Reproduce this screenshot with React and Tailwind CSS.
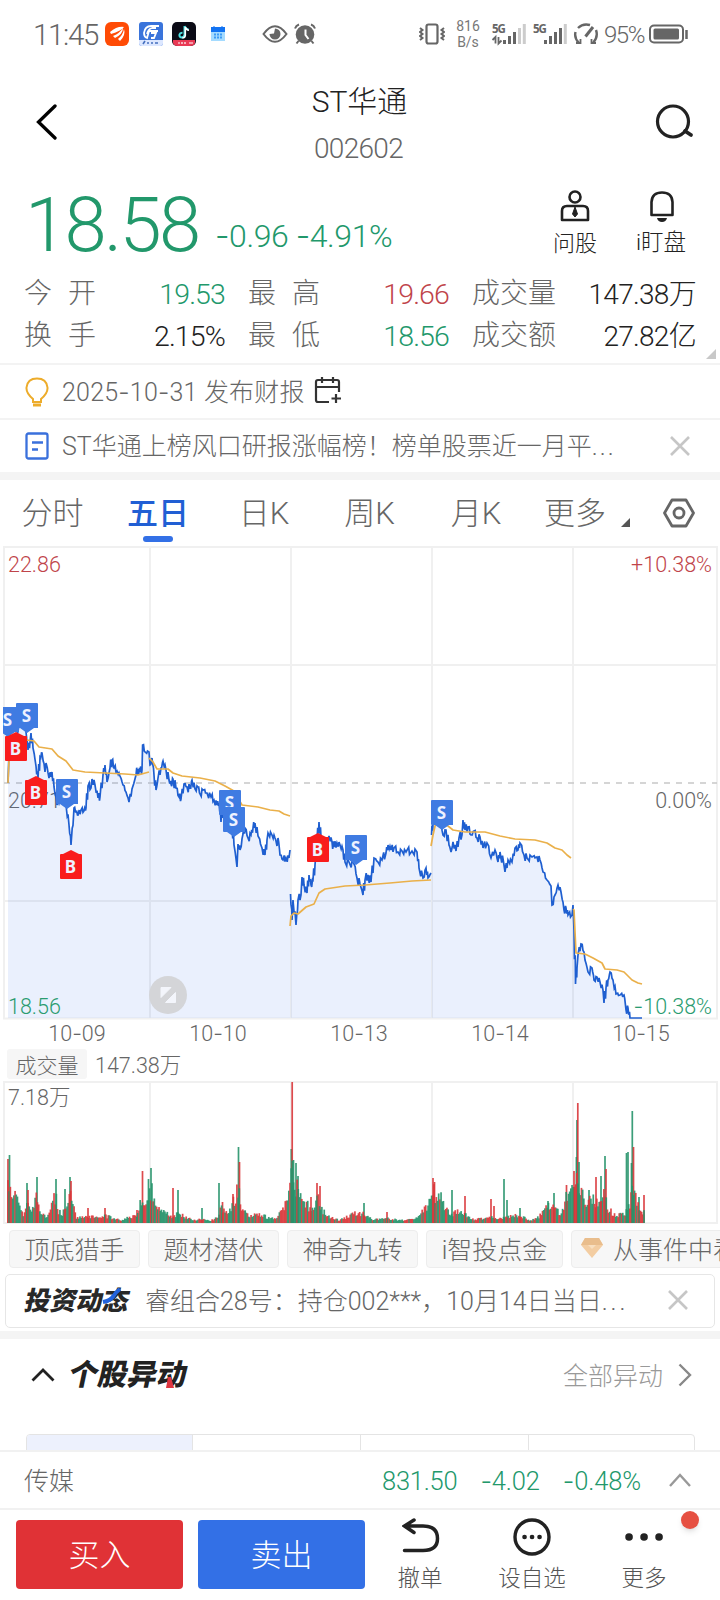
import React from 'react';

const DAYS = ['10-09', '10-10', '10-13', '10-14', '10-15'];
const GRID_X = [150, 291, 432, 573];

// price line, chart pixels
const PRICE = [
  [
    [8, 783], [9, 752], [12, 748], [16, 735], [20, 725], [24, 724], [26, 732], [28, 750], [30, 742], [31, 733], [33, 748], [36, 766], [38, 779], [40, 757], [42, 753], [45, 772], [46, 763], [49, 778], [52, 772], [54, 787], [57, 805], [60, 800], [63, 790], [66, 805], [69, 825], [71, 845], [74, 808], [76, 812], [78, 815], [81, 810], [84, 811], [86, 808], [88, 786], [91, 788], [92, 779], [95, 785], [98, 798], [100, 797], [103, 775], [105, 765], [107, 782], [110, 768], [112, 760], [114, 768], [117, 771], [120, 776], [123, 785], [126, 792], [129, 802], [132, 789], [136, 775], [138, 769], [140, 772], [142, 770], [142.6, 745], [145, 752], [149, 752], [150, 765], [152, 758], [154, 775], [156, 790], [158, 778], [161, 768], [163, 761], [166, 770], [169, 780], [171, 784], [173, 779], [176, 788], [179, 797], [181, 799], [184, 784], [187, 787], [190, 788], [192, 780], [195, 789], [198, 787], [200, 794], [203, 790], [207, 793], [211, 797], [214, 800], [217, 805], [219, 803], [221, 822], [223, 808], [226, 800], [229, 810], [232, 827], [234, 845], [237, 867], [238, 844], [240, 850], [243, 834], [245, 828], [248, 838], [251, 835], [253, 828], [255, 823], [258, 836], [262, 848], [265, 855], [267, 840], [268, 833], [272, 835], [275, 838], [277, 846], [278, 838], [280, 855], [283, 860], [286, 858], [289, 858], [290, 850],
  ],
  [
    [290.5, 894], [292, 920], [293, 900], [296, 925], [298, 900], [301, 895], [302, 877], [304, 885], [307, 893], [309, 875], [311, 885], [313, 880], [315, 865], [317, 840], [319, 822], [321, 838], [324, 845], [326, 850], [329, 836], [332, 842], [334, 847], [337, 843], [340, 845], [343, 850], [345, 862], [349, 862], [354, 864], [357, 878], [360, 884], [363, 895], [365, 880], [368, 875], [371, 882], [374, 858], [378, 862], [382, 860], [386, 853], [388, 845], [391, 850], [394, 848], [398, 852], [402, 851], [406, 852], [412, 851], [417, 852], [419, 868], [423, 878], [426, 868], [428, 878], [431, 873],
  ],
  [
    [431.5, 835], [433, 822], [436, 818], [440, 820], [443, 835], [446, 830], [449, 845], [451, 852], [453, 842], [456, 851], [459, 838], [462, 835], [463, 820], [465, 830], [468, 827], [471, 835], [474, 831], [477, 838], [480, 837], [483, 848], [487, 843], [491, 858], [495, 850], [498, 862], [500, 852], [504, 865], [505, 872], [508, 860], [512, 862], [515, 848], [518, 850], [520, 843], [524, 855], [527, 858], [532, 857], [537, 857], [540, 860], [543, 872], [547, 880], [551, 886], [552, 905], [555, 895], [558, 885], [561, 892], [564, 910], [566, 908], [568, 915], [572, 915], [573, 905], [574, 930], [575.5, 984], [577, 968], [578, 955], [581, 944], [584, 952], [585, 960], [588, 972], [592, 968], [594, 980], [597, 977], [600, 982], [603, 990], [604, 1003], [606, 988], [608, 980], [610, 972], [613, 980], [616, 994], [620, 995], [624, 995], [626, 1010], [628, 1008], [630, 1018], [634, 1018], [638, 1018], [642, 1018],
  ],
];

const AVERAGE = [
  '8,783 9,760 12,748 20,742 27,740 34,741 39,747 52,749 58,756 66,761 73,770 85,772 105,773 125,774 138,775 149,772',
  '149,758 153,762 157,769 168,769 173,773 182,776 200,778 215,781 225,786 234,791 242,805 258,807 270,810 279,811 284,814 290,816',
  '290,926 291,916 294,913 298,914 306,907 314,904 319,893 325,889 345,886 365,885 390,883 412,881 431,880',
  '431,846 433,835 436,822 448,826 453,830 465,832 485,832 500,836 515,839 535,840 547,843 555,848 562,850 567,855 571,858',
  '573,909 574,910 576,953 585,954 593,958 602,963 605,969 617,970 624,972 628,976 632,980 638,983 642,984',
];

const MARKERS = [
  ['S', 8, 707], ['S', 27, 703], ['B', 16, 732], ['B', 36, 776], ['S', 67, 779], ['B', 71, 850],
  ['S', 230, 790], ['S', 234, 807], ['B', 318, 833], ['S', 356, 835], ['S', 442, 800],
];

// volume envelope: [x, height]
const VOLUME = [
  [8, 55], [10, 45], [12, 30], [16, 38], [18, 28], [20, 15], [24, 8], [27, 25], [30, 12], [34, 25], [37, 30], [40, 15], [43, 12], [46, 8], [50, 12], [53, 25], [56, 30], [58, 15], [61, 10], [65, 15], [70, 34], [72, 24], [76, 6], [82, 6], [88, 8], [95, 6], [105, 8], [112, 6], [120, 3], [130, 7], [138, 9], [142, 30], [145, 18], [149, 34], [152, 35], [156, 22], [160, 12], [165, 12], [172, 7], [178, 11], [185, 7], [195, 3], [203, 5], [210, 2], [218, 7], [222, 18], [228, 10], [233, 22], [238, 40], [242, 18], [250, 8], [260, 9], [270, 6], [278, 6], [283, 18], [288, 24], [291, 60], [295, 46], [300, 30], [307, 20], [312, 16], [318, 30], [322, 15], [328, 7], [340, 3], [348, 8], [360, 12], [365, 9], [372, 4], [390, 5], [400, 3], [415, 4], [422, 13], [428, 20], [432, 40], [436, 30], [441, 27], [446, 16], [452, 11], [460, 13], [465, 9], [475, 4], [490, 7], [500, 5], [510, 8], [522, 8], [530, 2], [540, 8], [548, 18], [555, 16], [562, 11], [566, 27], [571, 32], [574, 37], [578, 50], [584, 24], [590, 25], [594, 26], [600, 18], [605, 34], [608, 18], [613, 9], [620, 9], [628, 14], [631, 30], [633, 44], [636, 25], [642, 14], [645, 14],
];

const SPIKES = [
  [8, 64, 'r'], [9.5, 68, 'g'], [27, 40, 'g'], [28, 33, 'r'], [37, 46, 'g'], [56, 44, 'g'], [65, 34, 'g'], [70, 46, 'g'], [71, 42, 'r'], [88, 15, 'r'], [105, 15, 'r'], [137, 13, 'r'],
  [142.5, 52, 'r'], [148.5, 44, 'g'], [151, 55, 'g'], [173, 35, 'r'], [178, 33, 'g'], [202, 15, 'g'], [219, 40, 'g'], [222.5, 21, 'r'], [233, 29, 'r'], [238.5, 76, 'g'], [239.5, 61, 'r'],
  [291.3, 74, 'g'], [292.2, 141, 'r'], [293.5, 63, 'g'], [296, 60, 'g'], [298, 47, 'g'], [311, 26, 'r'], [317, 40, 'r'], [320, 37, 'r'], [364, 20, 'g'], [387, 11, 'r'], [433, 45, 'r'], [434.5, 41, 'r'],
  [452, 33, 'g'], [465, 27, 'r'], [491, 24, 'r'], [494, 17, 'r'], [504, 44, 'g'], [507, 23, 'g'], [520, 15, 'g'], [548, 22, 'g'], [554, 30, 'g'], [566.5, 38, 'r'], [574, 52, 'r'], [576.4, 66, 'g'],
  [577, 103, 'g'], [577.8, 120, 'r'], [579, 61, 'g'], [589, 33, 'g'], [596, 46, 'r'], [601, 47, 'g'], [605, 67, 'g'], [606, 54, 'r'], [626.5, 70, 'g'], [628, 71, 'g'], [631.5, 60, 'g'], [632.3, 112, 'g'], [633.5, 76, 'r'], [639, 26, 'g'], [644, 28, 'r'],
];

const noise = (i) => {
  const v = Math.sin(i * 12.9898) * 43758.5453;
  return v - Math.floor(v);
};

const at = (points, x) => {
  for (let i = 1; i < points.length; i++) {
    if (x <= points[i][0]) {
      const [x0, y0] = points[i - 1];
      const [x1, y1] = points[i];
      return y0 + ((y1 - y0) * (x - x0)) / (x1 - x0);
    }
  }
  return points[points.length - 1][1];
};

// fills the gaps between anchors with minute by minute jitter
const jitter = (points) => {
  const out = [];
  points.forEach(([x, y], i) => {
    out.push([x, y]);
    const next = points[i + 1];
    if (next && next[0] - x >= 1.5 && y < 1018) {
      const mid = (x + next[0]) / 2;
      const dy = (noise(x) > 0.5 ? 1 : -1) * (1 + noise(x + 7) * 3.8);
      out.push([mid - 0.3, Math.min(1018, (y + next[1]) / 2 + dy)]);
      out.push([mid + 0.5, Math.min(1018, (y + next[1]) / 2 - dy * 0.7)]);
    }
  });
  return out;
};

const LINES = PRICE.map(jitter);

const BARS = [];
for (let x = 8; x < 645; x += 1.18) {
  const h = at(VOLUME, x) * (0.6 + noise(x) * 0.55);
  BARS.push([x, Math.max(2, h), noise(x + 3) > 0.5 ? 'r' : 'g']);
}

// hyphens come from Inter, its stroke is long enough for the figures
function Figures({ children, as: Tag = 'span' }) {
  return children.split('-').map((part, i) => (
    <React.Fragment key={i}>
      {i > 0 && <Tag className="font-['Inter']">-</Tag>}
      {part}
    </React.Fragment>
  ));
}

function Marker({ type, x, y }) {
  const sell = type === 'S';
  return (
    <g transform={`translate(${x - 11} ${y})`}>
      <path
        d={sell ? 'M1 0H21Q22 0 22 1V25H18L11 30L4 25H1Q0 25 0 24V1Q0 0 1 0Z' : 'M11 0L19 4H21Q22 4 22 5V28Q22 29 21 29H1Q0 29 0 28V5Q0 4 1 4H3Z'}
        fill={sell ? '#3f7be2' : '#f91c1c'}
      />
      <text x="10.500" y={sell ? 18.5 : 23} textAnchor="middle" className="fill-[#eef2ff] font-['Noto_Sans'] text-[17px] font-bold">
        {type}
      </text>
    </g>
  );
}

function PriceChart() {
  return (
    <svg viewBox="0 546 720 502" className="block h-[502px] w-[720px] shrink-0 text-[21.5px] font-light">
      <g stroke="#f0f0f0" strokeWidth="2" fill="none">
        <rect x="4" y="547" width="713" height="471.5" />
        {GRID_X.map((x) => <path key={x} d={`M${x} 547V1018`} />)}
        <path d="M4 665H717M4 901H717" />
      </g>
      <path d="M4 783H717" stroke="#c8c8c8" strokeWidth="1.6" strokeDasharray="6 6" />
      <text x="8" y="808" className="fill-[#666]">20.71</text>
      {LINES.map((line, i) => (
        <g key={i}>
          <path
            d={`M${line[0][0]} 1018L${line.map((p) => p.join(' ')).join('L')}L${line[line.length - 1][0]} 1018Z`}
            fill="#4a7cf0"
            fillOpacity="0.115"
          />
          <polyline points={line.map((p) => p.join(',')).join(' ')} fill="none" stroke="#1f5fd0" strokeWidth="1.700" />
        </g>
      ))}
      {AVERAGE.map((points) => (
        <polyline key={points} points={points} fill="none" stroke="#eab04a" strokeWidth="1.7" strokeLinejoin="round" />
      ))}
      <clipPath id="plot">
        <rect x="3" y="547" width="714" height="472" />
      </clipPath>
      <g clipPath="url(#plot)">
        {MARKERS.map(([type, x, y]) => <Marker key={`${x}-${y}`} type={type} x={x} y={y} />)}
      </g>
      <text x="8" y="572" className="fill-[#c0444a]">22.86</text>
      <text x="712" y="572" textAnchor="end" className="fill-[#c0444a]">+10.38%</text>
      <text x="712" y="808" textAnchor="end" className="fill-[#666]">0.00%</text>
      <text x="8" y="1014" className="fill-[#2a9c70]">18.56</text>
      <text x="712" y="1014" textAnchor="end" className="fill-[#2a9c70]"><Figures as="tspan">-10.38%</Figures></text>
      <circle cx="168" cy="995" r="19" fill="#d4d5d8" />
      <path d="M161 987.500H171L161 997.500ZM175.500 992.500V1002.500H165.500Z" fill="#f3f5fb" stroke="#f3f5fb" strokeLinejoin="round" />
      {DAYS.map((day, i) => (
        <text key={day} x={77 + i * 141} y="1041" textAnchor="middle" className="fill-[#666]"><Figures as="tspan">{day}</Figures></text>
      ))}
    </svg>
  );
}

function VolumeChart() {
  return (
    <svg viewBox="0 1081 720 144" className="block h-[144px] w-[720px] shrink-0 text-[21.5px] font-light">
      <g stroke="#f0f0f0" strokeWidth="2" fill="none">
        <rect x="4" y="1082" width="713" height="141" />
        {GRID_X.map((x) => <path key={x} d={`M${x} 1082V1223`} />)}
      </g>
      {[...SPIKES, ...BARS].map(([x, h, side], i) => (
        <rect key={i} x={x - 0.85} y={1223 - h} width="1.7" height={h} fill={side === 'r' ? '#d9363a' : '#26946a'} fillOpacity="0.9" />
      ))}
      <text x="8" y="1105" className="fill-[#666]">7.18万</text>
    </svg>
  );
}

function StatusBar() {
  return (
    <div className="flex h-[68px] items-center pl-[33px] pt-[2px] text-[#666]">
      <span className="w-[72px] whitespace-nowrap text-[29.5px] font-light tracking-[-0.045em]">11:45</span>
      <svg viewBox="0 0 24 24" className="-mt-[2px] size-6">
        <rect width="24" height="24" rx="6" fill="#ff4b05" />
        <path d="M5 10Q12 4 19 5Q16 9 6 12ZM8 14Q15 11 18 6Q18 12 10 16ZM13 17Q18 13 19 7Q21 13 15 19Z" fill="#fff" />
      </svg>
      <svg viewBox="0 0 24 24" className="-mt-[2px] ml-[10px] size-6">
        <rect width="24" height="24" rx="3" fill="#3a74db" />
        <path d="M0 18H24V21Q24 24 21 24H3Q0 24 0 21Z" fill="#dce7ff" />
        <path d="M20 4H12Q6 4 5 11Q5 15 8 16L10 9H19M17 6H13Q9 7 8 12M12 16H15L17 11H12" fill="none" stroke="#fff" strokeWidth="1.8" />
        <path d="M4 22L6 19M8 21H10M12 21H14M16 21H19" stroke="#4570bf" strokeWidth="1.6" />
      </svg>
      <svg viewBox="0 0 24 24" className="-mt-[2px] ml-[9px] size-6">
        <rect width="24" height="24" rx="5" fill="#0b0b16" />
        <path d="M1 18H23Q24 24 18 24H6Q0 24 1 18Z" fill="#e93a55" />
        <path d="M12.500 4V13Q12 15.500 9.500 15.500Q7 15 7.500 12.500Q8 10.500 10.500 10.700M12.500 4Q13.500 7 16.500 7.500" fill="none" stroke="#4de1e3" strokeWidth="2" />
        <path d="M13.300 5V13.500Q13 16 10.300 16M13.300 5Q14.300 8 17 8.200" fill="none" stroke="#fff" strokeWidth="1.6" />
        <path d="M6 21H8M10 20V22M13 20V22M17 21H21" stroke="#fff" strokeWidth="1.2" />
      </svg>
      <svg viewBox="0 0 16 16" className="-mt-[2px] ml-[14px] size-4">
        <path d="M1 2H15V15H1Z" fill="#a4dbff" />
        <path d="M1 1H15V6H1Z" fill="#1273f2" />
        <path d="M4 0V3M12 0V3" stroke="#1273f2" />
        <path d="M4 8.500H12M4 11.500H12" stroke="#3c9cf5" strokeWidth="1.800" strokeDasharray="2 1" />
      </svg>
      <svg viewBox="0 0 26 18" className="-mt-[2px] ml-[36px] h-[18px] w-[26px]">
        <path d="M1.500 9Q13-6.500 24.500 9Q13 24.500 1.500 9Z" fill="none" stroke="#666" strokeWidth="2" />
        <path d="M13 3.500A5.500 5.500 0 1 1 7.500 9L12 8.500Z" fill="#666" />
      </svg>
      <svg viewBox="0 0 22 22" className="-mt-[2px] ml-[6px] size-[22px]">
        <circle cx="11" cy="11.500" r="9.300" fill="#666" />
        <path d="M1 5.500Q2 2.500 5 1.500M21 5.500Q20 2.500 17 1.500M4.500 18L2.500 20.500M17.500 18L19.500 20.500" stroke="#666" strokeWidth="2" fill="none" />
        <path d="M11.500 6.500V12L14.500 16" stroke="#fff" strokeWidth="2" fill="none" />
      </svg>

      <svg viewBox="0 0 26 22" className="-mt-[2px] ml-[103px] h-[22px] w-[26px]" fill="none" stroke="#666">
        <rect x="7.500" y="1.500" width="11" height="19" rx="2" strokeWidth="2.200" />
        <path d="M1 5L3.500 7L1 9L3.500 11L1 13L3.500 15L1 17M25 5L22.500 7L25 9L22.500 11L25 13L22.500 15L25 17" strokeWidth="2" />
      </svg>
      <div className="-mt-[2px] ml-[11px] w-6 text-center text-[14px] leading-4 text-[#777]">
        <div>816</div>
        <div>B/s</div>
      </div>
      <svg viewBox="0 0 34 22" className="-mt-[2px] ml-[12px] h-[22px] w-[34px] overflow-visible">
        <text x="0" y="9.500" className="fill-[#666] font-['Open_Sans'] text-[11.5px] font-bold tracking-[-0.1em]">5G</text>
        <path d="M3.500 20.500V14L0.500 17M6.500 14V20.500L9.500 17.500" stroke="#666" strokeWidth="1.800" fill="none" />
        <path d="M12.500 17V21M17.500 13V21M22.500 9V21" stroke="#666" strokeWidth="3" />
        <path d="M27.500 5V21M32.300 1V21" stroke="#ccc" strokeWidth="3" />
      </svg>
      <svg viewBox="0 0 34 22" className="-mt-[2px] ml-[7px] h-[22px] w-[34px] overflow-visible">
        <text x="0" y="9.500" className="fill-[#666] font-['Open_Sans'] text-[11.5px] font-bold tracking-[-0.1em]">5G</text>
        <path d="M12.500 17V21M17.500 13V21M22.500 9V21M27.500 5V21" stroke="#666" strokeWidth="3" />
        <path d="M32.300 1V21" stroke="#ccc" strokeWidth="3" />
      </svg>
      <svg viewBox="0 0 26 22" className="-mt-[2px] ml-[6px] h-[22px] w-[26px]" fill="none" stroke="#666" strokeWidth="2.400">
        <path d="M6 20Q1 15 2.500 9M5 5Q10 0 17 2M23 7Q25.500 14 20 20" />
        <path d="M12.500 13.500L20 4" strokeWidth="3" />
        <path d="M3 20H7.500V16M23 20H18.500V16" strokeWidth="1.800" />
      </svg>
      <span className="ml-[5px] w-[43px] whitespace-nowrap text-[24px] font-light tracking-[-0.06em]">95%</span>
      <svg viewBox="0 0 40 20" className="-mt-[2px] ml-[2px] h-5 w-10">
        <rect x="1" y="1.500" width="33" height="17" rx="4" fill="none" stroke="#666" strokeWidth="2" />
        <rect x="4.500" y="4.500" width="25.500" height="11" rx="1.500" fill="#666" />
        <path d="M37.500 6V15" stroke="#666" strokeWidth="2.500" />
      </svg>
    </div>
  );
}

function Header() {
  return (
    <div className="flex h-[108px] items-center">
      <svg viewBox="0 0 22 36" className="ml-[36px] h-9 w-[22px]">
        <path d="M19 2L2.500 18L19 34" fill="none" stroke="#000" strokeWidth="3.300" strokeLinecap="round" />
      </svg>
      <div className="flex flex-1 flex-col items-center whitespace-nowrap pl-[4px] pt-[14px]">
        <div className="-mt-[2px] mb-[2px] pl-[2px] text-[30px] font-light leading-[44px] text-[#222]">ST华通</div>
        <div className="pb-1 text-[28px] font-light leading-[46px] tracking-[-0.025em] text-[#666]">002602</div>
      </div>
      <svg viewBox="0 0 40 36" className="mr-[25px] h-9 w-10">
        <circle cx="18" cy="17.500" r="15.500" fill="none" stroke="#222" strokeWidth="3.200" />
        <path d="M30 27L36 31" stroke="#222" strokeWidth="3.800" strokeLinecap="round" />
      </svg>
    </div>
  );
}

function Quote() {
  const rows = [
    ['今开', '19.53', 'text-[#22986b]', '最高', '19.66', 'text-[#c0444a]', '成交量', '147.38万'],
    ['换手', '2.15%', 'text-[#222]', '最低', '18.56', 'text-[#22986b]', '成交额', '27.82亿'],
  ];
  return (
    <div className="relative h-[187px] font-light">
      <div className="flex h-[94px] whitespace-nowrap text-[#22986b]">
        <div className="w-[189px] pl-[25px] text-[76px] leading-[99px] tracking-[-0.035em]">18.58</div>
        <div className="w-[364px] pl-[26px] pt-[41px] text-[32px] leading-[38px] tracking-[-0.013em]"><Figures>-0.96 -4.91%</Figures></div>
        <div className="flex flex-col items-center text-[22px] leading-7 text-[#222]">
          <svg viewBox="0 0 30 32" className="mt-[14px] h-8 w-[30px]" fill="none" stroke="#222" strokeWidth="2.600">
            <circle cx="15" cy="7" r="5.500" />
            <path d="M2 30V21Q2 16 7 16H23Q28 16 28 21V30Z" strokeLinejoin="round" />
            <path d="M15 17L17.500 24L15 27L12.500 24Z" fill="#222" stroke="#222" strokeWidth="1" />
          </svg>
          <span className="mt-[8px]">问股</span>
        </div>
        <div className="ml-[39px] flex flex-col items-center text-[22.5px] leading-7 text-[#222]">
          <svg viewBox="0 0 26 32" className="ml-[2px] mt-[14px] h-8 w-[26px]">
            <path d="M2.500 25V12Q3 2.500 13 2.500Q23 2.500 23.500 12V25Z" fill="none" stroke="#222" strokeWidth="2.600" strokeLinejoin="round" />
            <path d="M8 28H18Q17 32 13 32Q9 32 8 28Z" fill="#222" />
          </svg>
          <span className="mt-[6px]">i盯盘</span>
        </div>
      </div>
      <div className="flex flex-col pt-[3px]">
        {rows.map(([a, av, aColor, b, bv, bColor, c, cv]) => (
          <div key={c} className="flex h-[42px] items-center whitespace-nowrap pl-[24px] text-[28px] text-[#666]">
            <span className="flex w-[72px] justify-between">{[...a].map((ch) => <span key={ch}>{ch}</span>)}</span>
            <span className={`w-[129px] pt-[2px] text-right text-[28.5px] tracking-[-0.03em] ${aColor}`}>{av}</span>
            <span className="ml-[23px] flex w-[72px] justify-between">{[...b].map((ch) => <span key={ch}>{ch}</span>)}</span>
            <span className={`w-[129px] pt-[2px] text-right text-[28.5px] tracking-[-0.03em] ${bColor}`}>{bv}</span>
            <span className="ml-[23px]">{c}</span>
            <span className="flex-1 pr-[24px] pt-[2px] text-right tracking-[-0.025em] text-[#222]">{cv}</span>
          </div>
        ))}
      </div>
      <svg viewBox="0 0 10 10" className="absolute bottom-[4px] right-[4px] size-[10px]">
        <path d="M10 0V10H0Z" fill="#c8c8c8" />
      </svg>
    </div>
  );
}

function Close({ className }) {
  return (
    <svg viewBox="0 0 20 20" className={`size-5 ${className}`}>
      <path d="M1 1L19 19M19 1L1 19" stroke="#c6c6c6" strokeWidth="2.600" />
    </svg>
  );
}

function Notices() {
  return (
    <div className="whitespace-nowrap text-[25px] font-light text-[#666]">
      <div className="flex h-[55px] items-center border-t-2 border-[#f3f3f3] pl-[25px]">
        <svg viewBox="0 0 24 30" className="h-[30px] w-6" fill="none" stroke="#edac2b" strokeWidth="2">
          <path d="M8 25V22Q1 16 1.500 10.500Q2.500 1.500 12 1.500Q21.500 1.500 22.500 10.500Q23 16 16 22V25Z" />
          <path d="M8 28H16" strokeWidth="3" />
        </svg>
        <span className="ml-[13px] w-[252px] pt-[2px] tracking-[0.008em]"><Figures>2025-10-31 发布财报</Figures></span>
        <svg viewBox="0 0 28 28" className="-mt-1 h-7 w-7" fill="none" stroke="#333" strokeWidth="2.200">
          <path d="M15 26H4Q2 26 2 24V6Q2 4 4 4H23Q25 4 25 6V16M2 11H25M8 1V7M19 1V7M22 18V27M17.500 22.500H27" />
        </svg>
      </div>
      <div className="flex h-[54px] items-center border-t-2 border-[#f3f3f3] pl-[25px]">
        <svg viewBox="0 0 24 28" className="h-7 w-6" fill="none" stroke="#3a70dc" strokeWidth="2.300">
          <rect x="1.500" y="1.500" width="21" height="25" rx="2" />
          <path d="M7 10.500H18M7 17.500H13" />
        </svg>
        <span className="ml-[13px] flex-1 pt-[1px]">ST华通上榜风口研报涨幅榜！榜单股票近一月平<span className="tracking-[0.08em]">...</span></span>
        <Close className="mr-[30px]" />
      </div>
    </div>
  );
}

function Tabs() {
  const tabs = [['分时', 'w-[105px]'], ['五日', 'w-[106px]'], ['日K', 'w-[106px]'], ['周K', 'w-[105px]'], ['月K', 'w-[108px]']];
  return (
    <div className="flex h-[66px] whitespace-nowrap text-[31px] font-light leading-[67px] text-[#666]">
      {tabs.map(([label, width]) => (
        <div key={label} className={`relative text-center ${width} ${label === '五日' ? 'font-medium text-[#215fd4]' : ''}`}>
          {label}
          {label === '五日' && <div className="absolute bottom-1 left-[38px] h-[6px] w-[30px] rounded-full bg-[#3370e6]" />}
        </div>
      ))}
      <div className="ml-[14px]">更多</div>
      <svg viewBox="0 0 9 9" className="ml-[15px] mt-[38px] size-[9px]">
        <path d="M9 0V9H0Z" fill="#555" />
      </svg>
      <svg viewBox="0 0 32 30" className="ml-[33px] mt-[18px] h-[30px] w-8" fill="none" stroke="#666" strokeWidth="2.800">
        <path d="M9 2H23L30.500 15L23 28H9L1.500 15Z" strokeLinejoin="round" />
        <circle cx="16" cy="15" r="5" />
      </svg>
    </div>
  );
}

function Strategies() {
  const chip = 'flex h-[38px] shrink-0 items-center justify-center rounded-[4px] border border-[#ededed] bg-[#f7f7f7] pt-[3px]';
  return (
    <div className="flex h-[49px] gap-2 overflow-hidden whitespace-nowrap pl-[9px] pt-[5px] text-[25px] font-light text-[#666]">
      <div className={`${chip} w-[131px]`}>顶底猎手</div>
      <div className={`${chip} w-[131px]`}>题材潜伏</div>
      <div className={`${chip} w-[131px]`}>神奇九转</div>
      <div className={`${chip} w-[137px]`}>i智投点金</div>
      <div className={`${chip} pl-[9px] pr-4`}>
        <svg viewBox="0 0 22 20" className="-mt-[6px] mr-[10px] h-5 w-[22px]">
          <path d="M4 0H18L22 7L11 20L0 7Z" fill="#f3cda2" />
          <path d="M4 0H18L22 7H0Z" fill="#e9bd8c" />
          <path d="M7 7H15L11 11Z" fill="#f8dfc0" />
        </svg>
        从事件中看
      </div>
    </div>
  );
}

function Feed() {
  return (
    <div className="mx-[5px] flex h-[54px] items-center whitespace-nowrap rounded-[5px] border-[1.5px] border-[#e6e6e6] pl-[19px] pr-[26px] font-light text-[#666]">
      <div className="relative w-[108px] pt-[1px] text-[26px] font-black text-[#282828]">
        <div className="-skew-x-12">投资动态</div>
        <svg viewBox="0 0 22 16" className="absolute left-[77px] top-[7px] h-4 w-[22px]">
          <path d="M1 14Q8 13 11.500 8Q14 4 18 1" fill="none" stroke="#2263dc" strokeWidth="4" />
        </svg>
      </div>
      <span className="ml-[12px] flex-1 pt-[2px] text-[25px]">睿组合28号：持仓002***，10月14日当日<span className="tracking-[0.12em]">...</span></span>
      <Close className="-mt-[2px]" />
    </div>
  );
}

function Moves() {
  return (
    <div className="h-[111px] overflow-hidden">
      <div className="flex h-[72px] items-center whitespace-nowrap pl-[31px] pr-[28px]">
        <svg viewBox="0 0 24 14" className="h-[14px] w-6">
          <path d="M1.500 12.500L12 2L22.500 12.500" fill="none" stroke="#222" strokeWidth="2.800" />
        </svg>
        <div className="relative ml-[14px] flex-1 pt-[1px] text-[29.5px] font-black text-[#222]">
          <span className="inline-block -skew-x-12">个股异动</span>
          <svg viewBox="0 0 8 11" className="absolute left-[97px] top-[25px] h-[11px] w-2">
            <path d="M2 0H5L8 11H0Z" fill="#dd3540" />
          </svg>
        </div>
        <span className="pt-[3px] text-[25px] font-light text-[#999]">全部异动</span>
        <svg viewBox="0 0 14 24" className="ml-[15px] h-6 w-[14px]">
          <path d="M1.500 1.500L12 12L1.500 22.500" fill="none" stroke="#888" strokeWidth="2.400" />
        </svg>
      </div>
      <div className="ml-[26px] mr-[25px] mt-[23px] grid h-10 grid-cols-[166px_168px_168px_1fr] divide-x divide-[#e4e4e4] overflow-hidden rounded-[4px] border border-[#e4e4e4]">
        <div className="bg-[#edf1fd]" />
        <div />
        <div />
        <div />
      </div>
    </div>
  );
}

function Sector() {
  return (
    <div className="flex h-[58px] items-center whitespace-nowrap border-t-2 border-[#f1f1f1] pl-[24px] pr-[29px] text-[25px] font-light text-[#22986b]">
      <span className="flex-1 pt-[3px] text-[#666]">传媒</span>
      <span className="pt-[3px] text-[25.5px] tracking-[-0.01em]">831.50</span>
      <span className="ml-[23px] pt-[3px] text-[25.5px] tracking-[-0.005em]"><Figures>-4.02</Figures></span>
      <span className="ml-[23px] pt-[3px] text-[25.5px] tracking-[-0.005em]"><Figures>-0.48%</Figures></span>
      <svg viewBox="0 0 22 14" className="ml-[28px] h-[14px] w-[22px]">
        <path d="M1 13L11 2L21 13" fill="none" stroke="#999" strokeWidth="2.400" />
      </svg>
    </div>
  );
}

function Actions() {
  return (
    <div className="relative flex h-[92px] whitespace-nowrap border-t-2 border-[#f1f1f1] pl-[16px] pt-[10px] font-light">
      <button className="h-[69px] w-[167px] rounded-[4px] bg-[#e03236] pt-[3px] text-[31px] text-white">买入</button>
      <button className="ml-[15px] h-[69px] w-[167px] rounded-[4px] bg-[#3370e6] pt-[3px] text-[31px] text-white">卖出</button>
      <div className="ml-[5px] flex w-[100px] flex-col items-center text-[22.5px] leading-7 text-[#555]">
        <svg viewBox="0 0 38 36" className="-mt-[2px] ml-[2px] h-9 w-[38px]" fill="none" stroke="#222" strokeWidth="3.500" strokeLinecap="round">
          <path d="M2.500 8H21Q35.500 8 35.500 20.500Q35.500 32.500 21 32.500H2.500M12 2L2.500 8L12 14.500" />
        </svg>
        <span className="mt-[10px]">撤单</span>
      </div>
      <div className="ml-[12px] flex w-[100px] flex-col items-center text-[22.5px] leading-7 text-[#555]">
        <svg viewBox="0 0 38 38" className="-mt-[2px] size-[38px]">
          <circle cx="19" cy="19" r="17" fill="none" stroke="#222" strokeWidth="3.400" />
          <path d="M11.500 19H11.600M19 19H19.100M26.500 19H26.600" stroke="#222" strokeWidth="4.600" strokeLinecap="round" />
        </svg>
        <span className="mt-[8px]">设自选</span>
      </div>
      <div className="ml-[12px] flex w-[100px] flex-col items-center text-[22.5px] leading-7 text-[#555]">
        <svg viewBox="0 0 38 38" className="-mt-[2px] size-[38px]">
          <path d="M4 19H4.100M19 19H19.100M34 19H34.100" stroke="#222" strokeWidth="7.500" strokeLinecap="round" />
        </svg>
        <span className="mt-[8px]">更多</span>
      </div>
      <div className="absolute left-[681px] top-[1px] size-[18px] rounded-full bg-[#e65042] shadow-md" />
    </div>
  );
}

export default function App() {
  return (
    <div className="flex h-[1600px] w-[720px] flex-col overflow-hidden bg-white font-['Roboto','Noto_Sans_CJK_SC',sans-serif]">
      <StatusBar />
      <Header />
      <Quote />
      <Notices />
      <div className="h-2 bg-[#f4f4f4]" />
      <Tabs />
      <PriceChart />
      <div className="flex h-[33px] items-center whitespace-nowrap pb-[2px] pl-[7px] text-[21px] font-light text-[#666]">
        <span className="h-[30px] w-20 rounded-[3px] bg-[#f6f6f6] text-center leading-[34px]">成交量</span>
        <span className="ml-[8px] pt-[5px] text-[21.5px]">147.38万</span>
      </div>
      <VolumeChart />
      <Strategies />
      <Feed />
      <div className="mt-[3px] h-2 bg-[#f4f4f4]" />
      <Moves />
      <Sector />
      <Actions />
    </div>
  );
}
